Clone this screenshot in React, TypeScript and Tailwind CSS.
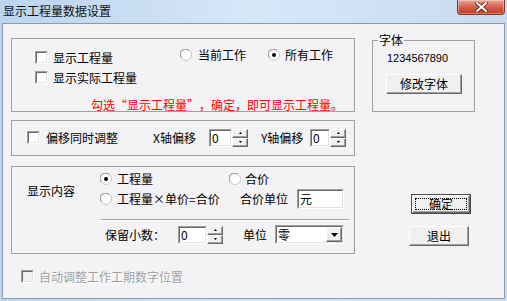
import React from "react"

const cjk = "font-['Noto_Sans_CJK_SC','Liberation_Sans',sans-serif]"

function Check({ disabled = false }: { disabled?: boolean }) {
  return (
    <span className="block h-[13px] w-[13px] shrink-0 border border-t-[#a0a0a0] border-l-[#a0a0a0] border-r-white border-b-white">
      <span
        className={`block h-full w-full border border-t-[#696969] border-l-[#696969] border-r-[#e3e3e3] border-b-[#e3e3e3] ${
          disabled ? "bg-[#f0f0f0]" : "bg-white"
        }`}
      />
    </span>
  )
}

function Radio({ checked = false }: { checked?: boolean }) {
  return (
    <svg width="12" height="12" viewBox="0 0 12 12" className="shrink-0">
      <circle cx="6" cy="6" r="5.5" fill="#ffffff" stroke="#c9c9c9" />
      <path d="M1.5 9 A5 5 0 0 1 9 1.5" fill="none" stroke="#8f8f8f" />
      {checked && <circle cx="6" cy="6" r="2" fill="#000000" />}
    </svg>
  )
}

function Sunken({ className, children }: { className: string; children?: React.ReactNode }) {
  return (
    <div className={`shrink-0 border border-t-[#a0a0a0] border-l-[#a0a0a0] border-r-white border-b-white ${className}`}>
      <div className="flex h-full w-full items-center border border-t-[#696969] border-l-[#696969] border-r-[#e3e3e3] border-b-[#e3e3e3] bg-white">
        {children}
      </div>
    </div>
  )
}

function Edit({ className, value }: { className: string; value: string }) {
  return (
    <Sunken className={className}>
      <span className="pl-[1px] text-[12px] leading-[12px] text-black">{value}</span>
    </Sunken>
  )
}

function Raised({ className, children }: { className: string; children?: React.ReactNode }) {
  return (
    <div
      className={`flex items-center justify-center border border-t-white border-l-white border-r-[#696969] border-b-[#696969] bg-[#f0f0f0] shadow-[inset_-1px_-1px_0_#a0a0a0] ${className}`}
    >
      {children}
    </div>
  )
}

function Spin() {
  return (
    <div className="flex h-[18px] w-[16px] shrink-0 flex-col">
      <Raised className="h-[9px] w-full">
        <svg width="3" height="2" viewBox="0 0 3 2">
          <polygon points="0,2 1.5,0 3,2" fill="#000" />
        </svg>
      </Raised>
      <Raised className="h-[9px] w-full">
        <svg width="3" height="2" viewBox="0 0 3 2">
          <polygon points="0,0 3,0 1.5,2" fill="#000" />
        </svg>
      </Raised>
    </div>
  )
}

function Txt({ children, className = "" }: { children: React.ReactNode; className?: string }) {
  return <span className={`whitespace-nowrap text-[12px] leading-[12px] ${className}`}>{children}</span>
}

export default function App() {
  return (
    <div className={`flex h-[301px] w-[507px] flex-col bg-linear-to-r from-[#bcd4ee] via-[#d6e7f8] to-[#c7dbf1] text-black ${cjk}`}>
      {/* title bar */}
      <div className="flex h-[23px] items-start justify-between">
        <span className="pl-[3px] pt-[4px] text-[12px] leading-[13px] text-[#111]">显示工程量数据设置</span>
        <div className="mr-[2px] flex h-[15px] w-[48px] items-center justify-center rounded-b-[4px] border border-t-0 border-[#83332a] bg-linear-to-b from-[#e8a597] via-[#d4604c] to-[#c2391f] shadow-[inset_0_0_0_1px_rgba(255,255,255,0.35)]">
          <svg width="13" height="10" viewBox="0 0 13 10">
            <path d="M2 1 L11 9 M11 1 L2 9" stroke="#5a2a22" strokeWidth="3.6" strokeLinecap="square" />
            <path d="M2 1 L11 9 M11 1 L2 9" stroke="#ffffff" strokeWidth="2" strokeLinecap="square" />
          </svg>
        </div>
      </div>

      {/* client area */}
      <div className="ml-[2px] flex h-[276px] w-[503px] border border-[#8a9bb0] bg-[#f3f2f5]">
        {/* left column */}
        <div className="flex flex-col pl-[8px] pt-[14px]">
          {/* group 1 */}
          <div className="flex h-[74px] w-[344px] flex-col border border-[#a0a0a0] pt-[10px]">
            <div className="flex items-start pl-[23px]">
              <div className="mt-[2px] flex w-[145px] items-center gap-[5px]">
                <Check />
                <Txt>显示工程量</Txt>
              </div>
              <div className="flex w-[88px] items-center gap-[6px]">
                <Radio />
                <Txt>当前工作</Txt>
              </div>
              <div className="flex items-center gap-[5px]">
                <Radio checked />
                <Txt>所有工作</Txt>
              </div>
            </div>
            <div className="mt-[7px] flex items-center gap-[5px] pl-[23px]">
              <Check />
              <Txt>显示实际工程量</Txt>
            </div>
            <div className="mt-[7px] pl-[79px]">
              <Txt className="text-[#ff0000]">
                勾选<span className="inline-block w-[12px] text-right">“</span>显示工程量
                <span className="inline-block w-[12px] text-left">”</span>，确定，即可显示工程量。
              </Txt>
            </div>
          </div>

          {/* group 2 */}
          <div className="mt-[8px] flex h-[36px] w-[344px] items-center border border-[#a0a0a0] pb-[1px] pl-[15px]">
            <div className="flex w-[126px] items-center gap-[6px]">
              <Check />
              <Txt>偏移同时调整</Txt>
            </div>
            <Txt className="w-[56px]">X轴偏移</Txt>
            <Edit className="h-[18px] w-[23px]" value="0" />
            <Spin />
            <Txt className="ml-[13px] w-[49px]">Y轴偏移</Txt>
            <Edit className="h-[18px] w-[20px]" value="0" />
            <Spin />
          </div>

          {/* group 3 */}
          <div className="mt-[10px] flex h-[88px] w-[344px] flex-col border border-[#a0a0a0] pt-[5px]">
            <div className="flex items-center pl-[15px]">
              <Txt className="w-[73px]">显示内容</Txt>
              <div className="flex flex-col gap-[3px]">
                <div className="flex h-[14px] items-center">
                  <div className="flex w-[129px] items-center gap-[5px]">
                    <Radio checked />
                    <Txt>工程量</Txt>
                  </div>
                  <div className="flex items-center gap-[4px]">
                    <Radio />
                    <Txt>合价</Txt>
                  </div>
                </div>
                <div className="flex h-[20px] items-center">
                  <div className="flex w-[140px] items-center gap-[5px]">
                    <Radio />
                    <Txt>工程量×单价=合价</Txt>
                  </div>
                  <Txt className="w-[57px]">合价单位</Txt>
                  <Edit className="h-[20px] w-[47px]" value="元" />
                </div>
              </div>
            </div>
            <div className="ml-[89px] mt-[10px] h-[2px] w-[248px] border-t border-b border-t-[#a0a0a0] border-b-white" />
            <div className="ml-[93px] mt-[4px] flex items-center">
              <Txt className="w-[73px]">保留小数：</Txt>
              <Edit className="h-[18px] w-[29px]" value="0" />
              <Spin />
              <Txt className="ml-[20px] w-[32px]">单位</Txt>
              <Sunken className="h-[19px] w-[69px]">
                <span className="flex-1 pl-[1px] text-[12px] leading-[12px]">零</span>
                <Raised className="h-full w-[16px]">
                  <svg width="7" height="4" viewBox="0 0 7 4">
                    <polygon points="0,0 7,0 3.5,4" fill="#000" />
                  </svg>
                </Raised>
              </Sunken>
            </div>
          </div>

          {/* bottom disabled checkbox */}
          <div className="ml-[10px] mt-[16px] flex items-center gap-[5px]">
            <Check disabled />
            <Txt className="text-[#a0a0a0] [text-shadow:1px_1px_0_#ffffff]">自动调整工作工期数字位置</Txt>
          </div>
        </div>

        {/* right column */}
        <div className="ml-[17px] flex flex-col pt-[16px]">
          <div className="relative h-[72px] w-[103px] border border-[#a0a0a0]">
            <span className="absolute -top-[7px] left-[5px] bg-[#f3f2f5] px-[1px] text-[12px] leading-[12px]">字体</span>
            <div className="flex flex-col items-center pt-[12px]">
              <span className="pr-[12px] font-['Liberation_Sans',sans-serif] text-[11px] leading-[11px]">1234567890</span>
              <Raised className="ml-[1px] mt-[10px] h-[20px] w-[76px]">
                <Txt>修改字体</Txt>
              </Raised>
            </div>
          </div>

          <div className="ml-[39px] mt-[82px] flex h-[20px] w-[60px] border border-[#4a4a4a]">
            <Raised className="h-full w-full p-[2px]">
              <span className="flex h-full w-full items-center justify-center border border-dotted border-black">
                <Txt>确定</Txt>
              </span>
            </Raised>
          </div>
          <Raised className="ml-[37px] mt-[12px] h-[20px] w-[60px]">
            <Txt>退出</Txt>
          </Raised>
        </div>
      </div>
    </div>
  )
}
